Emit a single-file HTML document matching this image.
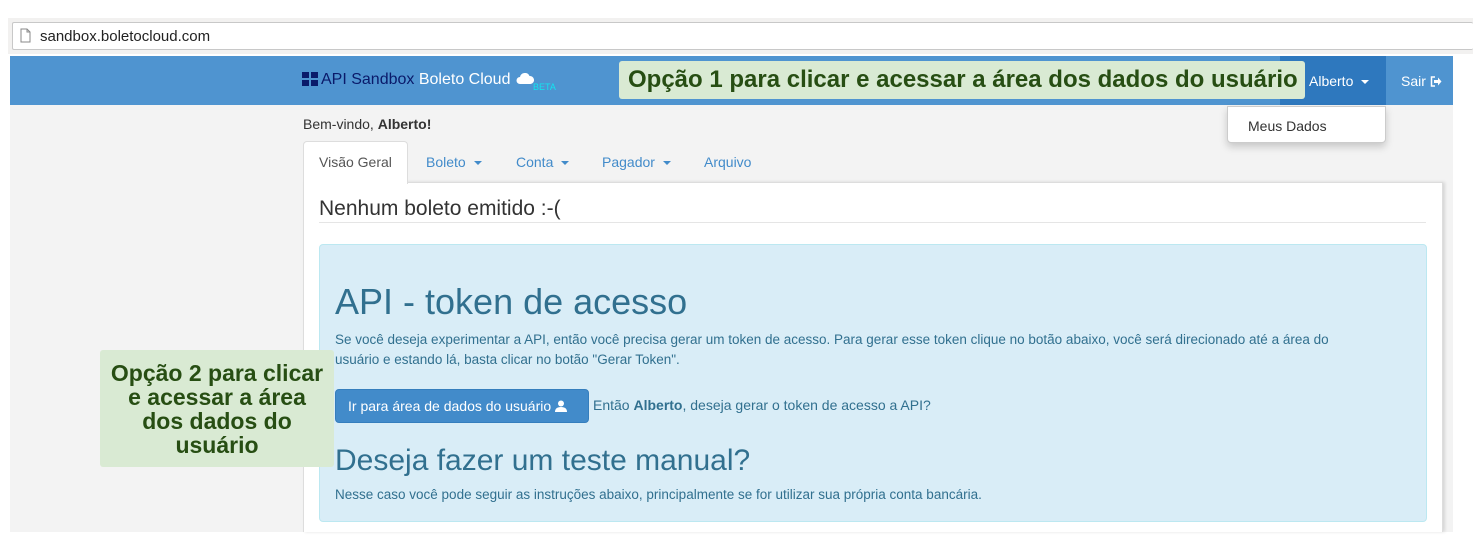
<!DOCTYPE html>
<html><head><meta charset="utf-8"><style>
*{box-sizing:border-box;margin:0;padding:0}
body{width:1473px;height:552px;background:#fff;font-family:"Liberation Sans",sans-serif;position:relative;overflow:hidden;color:#333}
.abs{position:absolute}
.url{left:12px;top:22px;width:1461px;height:28px;border:1px solid #c8c8c8;border-right:none;border-radius:2px;background:#fff;font-size:15px;color:#222;padding:5px 0 0 27px}
.urlbar{left:8px;top:18px;width:1465px;height:36px;background:#f2f1f0}
.nav{left:10px;top:56px;width:1443px;height:49px;background:#4f94d0}
.gray{left:10px;top:105px;width:1443px;height:427px;background:#f3f3f3}
.panel{left:303px;top:182px;width:1140px;height:350px;background:#fff;border:1px solid #ddd;border-bottom:none;box-shadow:2px 0 3px rgba(0,0,0,.12)}
.tab{top:150px;font-size:14px;color:#428bca}
.caret{display:inline-block;width:0;height:0;border-left:4px solid transparent;border-right:4px solid transparent;border-top:4px solid currentColor;vertical-align:middle;margin-left:4px}
.callout{background:#d9ead3;color:#274e13;font-weight:bold;font-family:"Liberation Sans",Arial,sans-serif;border-radius:3px}
</style></head><body>
<div class="abs urlbar"></div>
<div class="abs url">sandbox.boletocloud.com</div>
<svg class="abs" style="left:20px;top:28px" width="11" height="15"><path d="M1 1h6l3 3v10H1z" fill="#fff" stroke="#888"/><path d="M7 1v3h3" fill="none" stroke="#888"/></svg>

<div class="abs nav"></div>
<div class="abs" style="left:302px;top:72px;display:grid;grid-template-columns:7px 7px;gap:2px">
<div style="width:7px;height:6px;background:#0a1a6a"></div><div style="width:7px;height:6px;background:#0a1a6a"></div>
<div style="width:7px;height:6px;background:#0a1a6a"></div><div style="width:7px;height:6px;background:#0a1a6a"></div></div>
<div class="abs" style="left:321px;top:71px;font-size:16px;color:#0a1a6a">API Sandbox <span style="color:#fff">Boleto Cloud</span></div>
<svg class="abs" style="left:516px;top:73px" width="18" height="12"><path d="M4 11a3.5 3.5 0 0 1 0-7 5 5 0 0 1 9.5-1 4 4 0 0 1 1 8z" fill="#fff"/></svg>
<div class="abs" style="left:533px;top:82px;font-size:9px;color:#12e4f0">BETA</div>

<div class="abs" style="left:1280px;top:56px;width:106px;height:49px;background:#2e78be"></div>
<div class="abs" style="left:1309px;top:73px;font-size:14px;color:#fff">Alberto <span class="caret"></span></div>
<div class="abs" style="left:1401px;top:73px;font-size:14px;color:#fff">Sair <svg width="12" height="11" style="vertical-align:-1px"><path d="M5 1H1.5v9H5" fill="none" stroke="#fff" stroke-width="1.5"/><path d="M4 4h4V1.5L11.5 5.5 8 9.5V7H4z" fill="#fff"/></svg></div>

<div class="abs gray"></div>
<div class="abs" style="left:1227px;top:106px;width:159px;height:37px;background:#fff;border:1px solid #ccc;border-radius:0 0 4px 4px;box-shadow:0 4px 8px rgba(0,0,0,.18);font-size:14px;color:#333;padding:11px 0 0 20px">Meus Dados</div>

<div class="abs" style="left:303px;top:116px;font-size:14px;color:#333">Bem-vindo, <b>Alberto!</b></div>

<div class="abs panel"></div>
<div class="abs" style="left:303px;top:141px;width:105px;height:43px;background:#fff;border:1px solid #ddd;border-bottom:none;border-radius:4px 4px 0 0;font-size:14px;color:#555;padding:12px 0 0 15px">Visão Geral</div>
<div class="abs tab" style="left:426px;top:154px">Boleto <span class="caret"></span></div>
<div class="abs tab" style="left:516px;top:154px">Conta <span class="caret"></span></div>
<div class="abs tab" style="left:602px;top:154px">Pagador <span class="caret"></span></div>
<div class="abs tab" style="left:704px;top:154px">Arquivo</div>

<div class="abs" style="left:319px;top:197px;font-size:21px;color:#333">Nenhum boleto emitido :-(</div>
<div class="abs" style="left:319px;top:222px;width:1107px;height:1px;background:#e5e5e5"></div>

<div class="abs" style="left:319px;top:244px;width:1108px;height:278px;background:#d9edf7;border:1px solid #bce8f1;border-radius:4px"></div>
<div class="abs" style="left:335px;top:281px;font-size:36px;color:#31708f">API - token de acesso</div>
<div class="abs" style="left:335px;top:330px;width:1020px;font-size:13.5px;line-height:20px;color:#31708f">Se você deseja experimentar a API, então você precisa gerar um token de acesso. Para gerar esse token clique no botão abaixo, você será direcionado até a área do usuário e estando lá, basta clicar no botão "Gerar Token".</div>
<div class="abs" style="left:335px;top:389px;width:254px;height:34px;background:#428bca;border:1px solid #357ebd;border-radius:4px;color:#fff;font-size:14px;padding:8px 0 0 12px">Ir para área de dados do usuário <svg width="12" height="12" style="vertical-align:-1px"><circle cx="6" cy="3.5" r="3" fill="#fff"/><path d="M0 12q0-5 6-5t6 5z" fill="#fff"/></svg></div>
<div class="abs" style="left:593px;top:397px;font-size:14px;color:#31708f">Então <b>Alberto</b>, deseja gerar o token de acesso a API?</div>
<div class="abs" style="left:335px;top:444px;font-size:30px;color:#31708f">Deseja fazer um teste manual?</div>
<div class="abs" style="left:335px;top:487px;font-size:13.5px;color:#31708f">Nesse caso você pode seguir as instruções abaixo, principalmente se for utilizar sua própria conta bancária.</div>

<div class="abs callout" style="left:619px;top:61px;width:686px;height:38px;font-size:24px;padding:5px 0 0 9px;white-space:nowrap">Opção 1 para clicar e acessar a área dos dados do usuário</div>
<div class="abs callout" style="left:100px;top:350px;width:234px;height:117px;font-size:23px;line-height:24px;text-align:center;padding-top:11px;white-space:nowrap">Opção 2 para clicar<br>e acessar a área<br>dos dados do<br>usuário</div>
</body></html>
